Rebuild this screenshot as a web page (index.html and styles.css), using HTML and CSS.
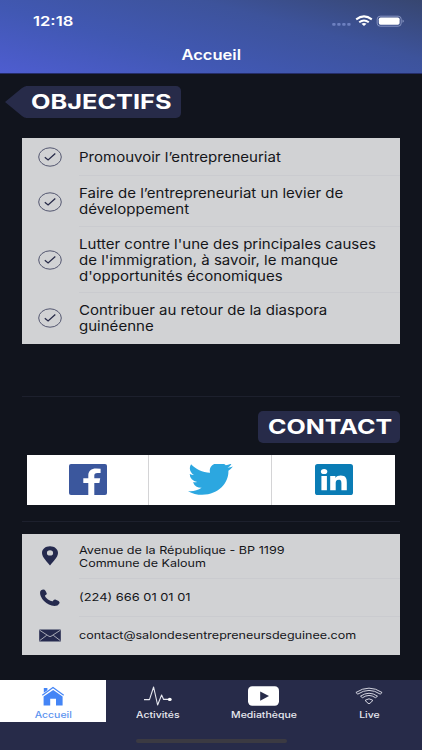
FILE: index.html
```html
<!DOCTYPE html>
<html lang="fr">
<head>
<meta charset="utf-8">
<title>Accueil</title>
<link rel="stylesheet" href="styles.css">
</head>
<body>
<div class="app">
  <header class="header">
    <div class="status">
      <span class="time"><span class="t t-time">12:18</span></span>
      <svg class="status-icons" width="74" height="14" viewBox="0 0 74 14">
        <g fill="#6d80c0"><rect x="1.2" y="9" width="3.4" height="2.8" rx="1"/><rect x="6.2" y="9" width="3.4" height="2.8" rx="1"/><rect x="11.2" y="9" width="3.4" height="2.8" rx="1"/><rect x="16.2" y="9" width="3.4" height="2.8" rx="1"/></g>
        <g fill="none" stroke="#fff" stroke-width="2"><path d="M25.2 5.4Q33 -.6 40.8 5.4"/><path d="M28.2 8.3Q33 4.6 37.8 8.3"/></g>
        <path d="M30.5 9.7Q33 8.2 35.5 9.7L33 12Z" fill="#fff"/>
        <rect x="46.2" y="2.2" width="24" height="10" rx="3" fill="none" stroke="#8f9cc8" stroke-width=".9"/>
        <rect x="47.8" y="3.6" width="20.8" height="7.2" rx="1.7" fill="#fff"/>
        <path d="M71.6 5.4Q73.8 7.1 71.6 8.8Z" fill="#9aa6cf"/>
      </svg>
    </div>
    <h1 class="title"><span class="t t-title">Accueil</span></h1>
  </header>

  <main class="main">
    <h2 class="ribbon">
      <svg class="ribbon-tip" width="22" height="32" viewBox="0 0 22 32"><path d="M0 16L17 2Q20 0 22 0V32Q19 32 17 30Z" fill="#272b49"/></svg>
      <span class="ribbon-body"><span class="t t-obj">OBJECTIFS</span></span>
    </h2>

    <ul class="card goals">
      <li class="row r1"><svg class="check" viewBox="0 0 24 20"><ellipse cx="12" cy="10" rx="11.3" ry="9.2"/><path class="tick" d="M6.8 10.3L10.1 13L17.3 6.6"/></svg><p class="text"><span class="t">Promouvoir l’entrepreneuriat</span></p></li>
      <li class="row r2"><svg class="check" viewBox="0 0 24 20"><ellipse cx="12" cy="10" rx="11.3" ry="9.2"/><path class="tick" d="M6.8 10.3L10.1 13L17.3 6.6"/></svg><p class="text"><span class="t">Faire de l’entrepreneuriat un levier de</span><span class="t">développement</span></p></li>
      <li class="row r3"><svg class="check" viewBox="0 0 24 20"><ellipse cx="12" cy="10" rx="11.3" ry="9.2"/><path class="tick" d="M6.8 10.3L10.1 13L17.3 6.6"/></svg><p class="text"><span class="t">Lutter contre l'une des principales causes</span><span class="t">de l'immigration, à savoir, le manque</span><span class="t">d'opportunités économiques</span></p></li>
      <li class="row r4"><svg class="check" viewBox="0 0 24 20"><ellipse cx="12" cy="10" rx="11.3" ry="9.2"/><path class="tick" d="M6.8 10.3L10.1 13L17.3 6.6"/></svg><p class="text"><span class="t">Contribuer au retour de la diaspora</span><span class="t">guinéenne</span></p></li>
    </ul>

    <section class="contact">
      <h2 class="badge"><span class="t t-contact">CONTACT</span></h2>
      <div class="social">
        <a class="cell"><svg width="38" height="31" viewBox="0 0 38 31"><rect width="38" height="31" rx="2" fill="#3b579d"/><path d="M19.3 31V19H14.3V14.3H19.3V11.2C19.3 7 22.4 4.5 27 4.5Q29.6 4.5 31.6 4.8V9H28.5C26 9 25.3 10 25.3 11.5V14.3H31.2L30.4 19H25.3V31Z" fill="#fff"/></svg></a>
        <a class="cell"><svg width="45" height="31" viewBox="0 3 24 18.9" preserveAspectRatio="none"><path fill="#2ca7e0" d="M23.95 4.57a10 10 0 0 1-2.82.77 4.96 4.96 0 0 0 2.16-2.72c-.95.55-2 .95-3.13 1.18a4.92 4.92 0 0 0-8.38 4.48C7.69 8.09 4.07 6.13 1.64 3.16a4.82 4.82 0 0 0-.67 2.48c0 1.71.87 3.21 2.19 4.1a4.9 4.9 0 0 1-2.23-.62v.06a4.92 4.92 0 0 0 3.95 4.83 5 5 0 0 1-2.21.08 4.94 4.94 0 0 0 4.6 3.42A9.87 9.87 0 0 1 0 19.54a13.99 13.99 0 0 0 7.55 2.21c9.05 0 14-7.5 14-13.98 0-.21 0-.42-.02-.63a9.94 9.94 0 0 0 2.42-2.57z"/></svg></a>
        <a class="cell"><svg width="38" height="31" viewBox="0 0 38 31"><rect width="38" height="31" rx="2.6" fill="#0a7cb5"/><g fill="#fff"><ellipse cx="9.1" cy="7.5" rx="3.2" ry="2.6"/><path d="M6.4 12H11.9V26.2H6.4ZM15.2 12H20.4V14C21.5 12.4 23.4 11.6 25.7 11.6C30.8 11.6 31.8 14.5 31.8 18.4V26.2H26.4V19.3C26.4 17.6 26.3 15.7 23.8 15.7C21.2 15.7 20.7 17.3 20.7 19.2V26.2H15.2Z"/></g></svg></a>
      </div>
    </section>

    <ul class="card infos">
      <li class="row i1"><svg class="ico" viewBox="0 0 24 20"><path fill="#252a4e" fill-rule="evenodd" d="M12 .3C7.4.3 4 3.2 4 7C4 11.2 9 15.6 12 19.4C15 15.6 20 11.2 20 7C20 3.2 16.6.3 12 .3ZM12 4.3A3.1 2.6 0 1 1 12 9.5A3.1 2.6 0 1 1 12 4.3Z"/></svg><p class="text"><span class="t c1">Avenue de la République - BP 1199</span><span class="t">Commune de Kaloum</span></p></li>
      <li class="row i2"><svg class="ico" viewBox="0 0 24 20"><path fill="#252a4e" d="M2.1 3.7Q2.5 2 5 1.6Q6.6 1.5 7.6 3L8.8 5.5Q9.1 6.7 7 7.6Q6.8 9.2 10 11.5Q12.9 13.5 14.8 13.2Q15.6 11.3 17.3 11.6L20.6 13Q22.3 14 21.2 15.8Q20 18 16.5 18Q10.5 17.3 6 12.9Q1.5 8.3 2.1 3.7Z"/></svg><p class="text"><span class="t c3">(224) 666 01 01 01</span></p></li>
      <li class="row i3"><svg class="ico" viewBox="0 0 24 20"><rect x="1.2" y="3.4" width="21.6" height="12" rx=".5" fill="#252a4e"/><path d="M1.6 4.2L11 10.3Q12 10.8 13 10.3L22.4 4.2M1.7 14.6L8.7 9.3M22.3 14.6L15.3 9.3" fill="none" stroke="#c8c9cf" stroke-width=".8"/></svg><p class="text"><span class="t">contact@salondesentrepreneursdeguinee.com</span></p></li>
    </ul>
  </main>

  <nav class="tabs">
    <a class="tab active"><svg width="24" height="20" viewBox="0 0 24 20"><g fill="#4485f6"><path d="M2.6 10.4L12.2 4L21.6 10.4V19.4H15V12.8H9.2V19.4H2.6Z"/><path d="M2.8 2H6.4V4.2L2.8 6.8Z"/></g><path d="M1.3 9.2L12 1.5L22.7 9.2" fill="none" stroke="#4485f6" stroke-width="1.2"/></svg><span class="t">Accueil</span></a>
    <a class="tab"><svg width="28" height="20" viewBox="0 0 28 20"><path d="M0 13.6H5.5L9.6 1L13.6 19L17.6 9L19.6 13.4H25" fill="none" stroke="#e6e7ef" stroke-width="1.1" stroke-linejoin="round"/><ellipse cx="25.8" cy="13.4" rx="1.9" ry="1.6" fill="#fff"/></svg><span class="t">Activités</span></a>
    <a class="tab"><svg width="31" height="20" viewBox="0 0 31 20"><rect y=".3" width="31" height="19.4" rx="4.2" fill="#fff"/><path d="M12.2 5.4V14.7L21 10Z" fill="#272b49"/></svg><span class="t">Mediathèque</span></a>
    <a class="tab"><svg width="28" height="20" viewBox="0 0 28 20"><g fill="none" stroke="#e6e7ef" stroke-width=".9" stroke-linejoin="round"><path d="M.9 6.5Q14-2.2 27.1 6.5L25.2 8.1Q14 .7 2.8 8.1Z"/><path d="M5.5 10.2Q14 4.3 22.5 10.2L20.5 11.7Q14 7.2 7.5 11.7Z"/><path d="M10.3 14.2Q14 11.4 17.7 14.2Q17 16.2 14 17.8Q11 16.2 10.3 14.2Z"/></g></svg><span class="t">Live</span></a>
    <div class="home-indicator"></div>
  </nav>
</div>
</body>
</html>
```
FILE: styles.css
```css
* { box-sizing: border-box; margin: 0; padding: 0; }
body {
  width: 422px;
  height: 750px;
  overflow: hidden;
  background: #11141d;
  font-family: Inter, "Liberation Sans", sans-serif;
}
ul { list-style: none; }
svg { display: block; flex: none; }

.app { height: 750px; display: flex; flex-direction: column; }

/* wide lettering: every line is stretched horizontally */
.t {
  display: block;
  width: max-content;
  white-space: nowrap;
  transform: scaleX(var(--sx, 1.2));
  transform-origin: 0 50%;
}

.header {
  height: 73.5px;
  flex: none;
  color: #fff;
  background: linear-gradient(15deg, #4e5dd0 0%, #4158b3 35%, #3d539b 68%, #374670 100%);
  border-bottom: 1px solid #252d68;
}
.status {
  height: 42px;
  padding: 0 17px 0 33px;
  display: flex;
  align-items: center;
  justify-content: space-between;
}
.t-time { --sx: 1.23; font-size: 13.5px; font-weight: 600; line-height: 42px; }
.title { display: flex; justify-content: center; height: 26px; }
.t-title { --sx: 1.18; font-size: 14px; font-weight: 600; line-height: 26px; transform-origin: 50% 50%; }

.main { flex: 1; padding: 12.5px 22px 0 22px; }

.ribbon { display: flex; height: 32px; margin-left: -17px; }
.ribbon-body {
  width: 155px;
  margin-left: -1px;
  padding-left: 5px;
  background: #272b49;
  border-radius: 0 5px 5px 0;
}
.t-obj, .t-contact { color: #fff; font-size: 20px; font-weight: 700; line-height: 32px; }
.t-obj { --sx: 1.265; }
.t-contact { --sx: 1.25; }

.card { background: #d1d2d4; color: #15161a; }
.goals { margin-top: 20px; height: 205.5px; }
.row { display: flex; align-items: center; padding-left: 16px; }
.check, .ico { width: 24px; height: 20px; }
.check { fill: none; stroke: #464965; stroke-width: 0.9; }
.check .tick { stroke: #282b49; stroke-width: 1.3; }
.text {
  flex: 1;
  height: 100%;
  margin-left: 17px;
  display: flex;
  flex-direction: column;
  justify-content: center;
  border-bottom: 1px solid #cacbcf;
}
.row:last-child .text { border-bottom: 0; }
.goals .text { --sx: 1.13; font-size: 13.3px; line-height: 16px; }
.r1 { height: 38px; }
.r2 { height: 51px; }
.r3 { height: 66px; }
.r4 { height: 50.5px; }

.contact {
  margin-top: 52.5px;
  height: 126px;
  border-top: 1px solid #1d202d;
  border-bottom: 1px solid #1d202d;
  display: flex;
  flex-direction: column;
}
.badge {
  align-self: flex-end;
  width: 142px;
  height: 31.5px;
  margin-top: 14px;
  padding-left: 9.5px;
  border-radius: 5px;
  background: #272b49;
}
.social {
  height: 49.5px;
  margin: 12.5px 5px 0;
  display: grid;
  grid-template-columns: 122px 123px 1fr;
  background: #fff;
}
.cell { display: flex; align-items: center; justify-content: center; border-right: 1px solid #d4d4d6; }
.cell:last-child { border-right: 0; }

.infos { margin-top: 12px; height: 120.5px; }
.infos .text { --sx: 1.158; padding-top: 2px; font-size: 10.8px; line-height: 12.6px; }
.infos .i1 .text { padding-top: 4px; }
.infos .c1 { --sx: 1.168; }
.infos .c3 { --sx: 1.19; }
.i1 { height: 44.5px; }
.i2 { height: 38px; }
.i3 { height: 38px; }

.tabs {
  height: 70px;
  flex: none;
  background: #272b49;
  display: grid;
  grid-template-columns: repeat(4, 1fr);
  grid-template-rows: 41.5px 1fr;
}
.tab {
  padding-top: 6px;
  display: flex;
  flex-direction: column;
  align-items: center;
  color: #e8e9f0;
  font-size: 8.6px;
  font-weight: 500;
}
.tab .t { --sx: 1.22; margin-top: 3.5px; line-height: 11px; transform-origin: 50% 50%; }
.active { background: #fff; color: #5c93ef; }
.home-indicator {
  grid-column: 1 / -1;
  justify-self: center;
  width: 151px;
  height: 4.5px;
  margin-top: 17px;
  border-radius: 3px;
  background: #3b3a42;
}
```
